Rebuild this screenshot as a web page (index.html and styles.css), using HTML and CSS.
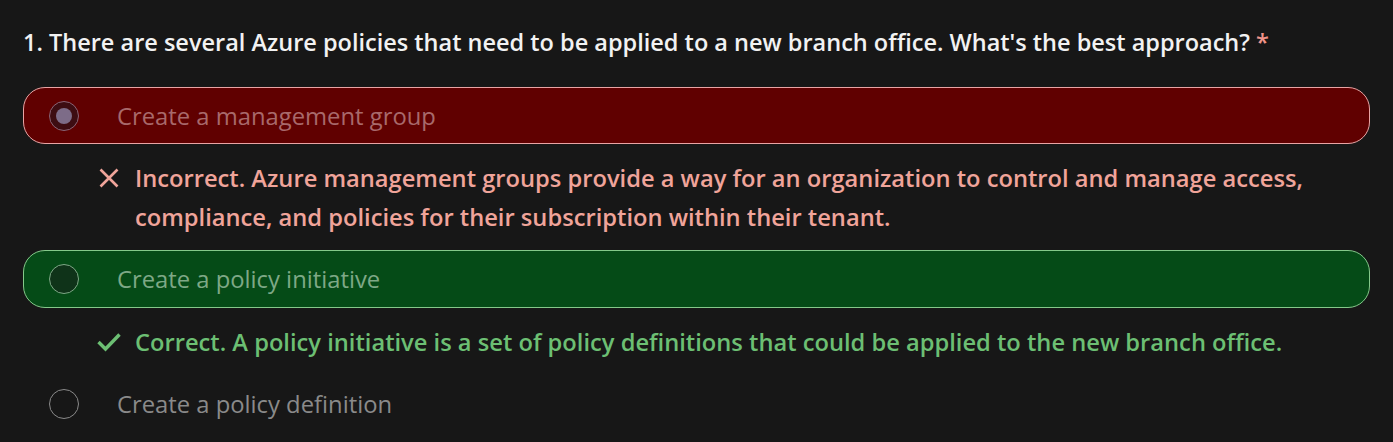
FILE: index.html
```html
<!DOCTYPE html>
<html>
<head>
<meta charset="utf-8">
<link rel="stylesheet" href="styles.css">
</head>
<body>
<div class="quiz">
  <h2 class="question">1. There are several Azure policies that need to be applied to a new branch office. What's the best approach? <span class="req">*</span></h2>
  <div class="option option-wrong">
    <span class="radio radio-checked"><span class="dot"></span></span>
    <span class="label">Create a management group</span>
  </div>
  <div class="feedback feedback-wrong">
    <svg class="fb-icon" viewBox="0 0 24 20" width="24" height="20"><path d="M3.5 1.5 L20.5 18.5 M20.5 1.5 L3.5 18.5" stroke="currentColor" stroke-width="2.6" stroke-linecap="butt" fill="none"/></svg>
    <p class="fb-text">Incorrect. Azure management groups provide a way for an organization to control and manage access, compliance, and policies for their subscription within their tenant.</p>
  </div>
  <div class="option option-right">
    <span class="radio"></span>
    <span class="label">Create a policy initiative</span>
  </div>
  <div class="feedback feedback-right">
    <svg class="fb-icon" viewBox="0 0 24 20" width="24" height="20"><path d="M1.5 10 L8.5 17 L22.5 2.5" stroke="currentColor" stroke-width="3.4" stroke-linecap="butt" stroke-linejoin="miter" fill="none"/></svg>
    <p class="fb-text">Correct. A policy initiative is a set of policy definitions that could be applied to the new branch office.</p>
  </div>
  <div class="option option-plain">
    <span class="radio"></span>
    <span class="label">Create a policy definition</span>
  </div>
</div>
</body>
</html>
```
FILE: styles.css
```css
html, body {
  margin: 0;
  padding: 0;
  background: #171717;
}
body {
  font-family: "Open Sans", "Noto Sans", sans-serif;
}
.quiz {
  padding: 26px 23px 0 23px;
  width: 1347px;
}
.question {
  margin: 0 0 29px 0;
  font-size: 23.5px;
  font-weight: 600;
  color: #f2f2f2;
  line-height: 32px;
}
.req {
  color: #f1948a;
}
.option {
  box-sizing: border-box;
  height: 57px;
  display: flex;
  align-items: center;
  padding-left: 25px;
  gap: 38px;
  border-radius: 22px;
  border: 1px solid transparent;
}
.option-wrong {
  background: #600000;
  border-color: #e9a4a4;
}
.option-right {
  background: #054b17;
  border-color: #84c98a;
  height: 58px;
}
.radio {
  box-sizing: border-box;
  width: 30px;
  height: 30px;
  border-radius: 50%;
  border: 1px solid #8a8a8a;
  display: flex;
  align-items: center;
  justify-content: center;
  flex: none;
}
.radio-checked {
  background: #3d0d12;
  border-color: #8a6476;
}
.dot {
  width: 16px;
  height: 16px;
  border-radius: 50%;
  background: #7d6c88;
}
.option-right .radio {
  background: #0f3319;
  border-color: #7ea886;
}
.label {
  font-size: 23.8px;
  color: #8a8a8a;
}
.option-wrong .label {
  color: #a8696b;
}
.option-right .label {
  color: #7ea886;
}
.feedback {
  display: flex;
  align-items: flex-start;
  padding-left: 74px;
  margin: 15px 0 13px 0;
}
.fb-icon {
  flex: none;
  width: 24px;
  margin-top: 9px;
  margin-right: 14px;
}
.fb-text {
  margin: 0;
  font-size: 23.7px;
  font-weight: 600;
  line-height: 39px;
  max-width: 1225px;
}
.feedback-wrong {
  color: #f0a49a;
}
.feedback-right {
  color: #6cbf73;
}
```
